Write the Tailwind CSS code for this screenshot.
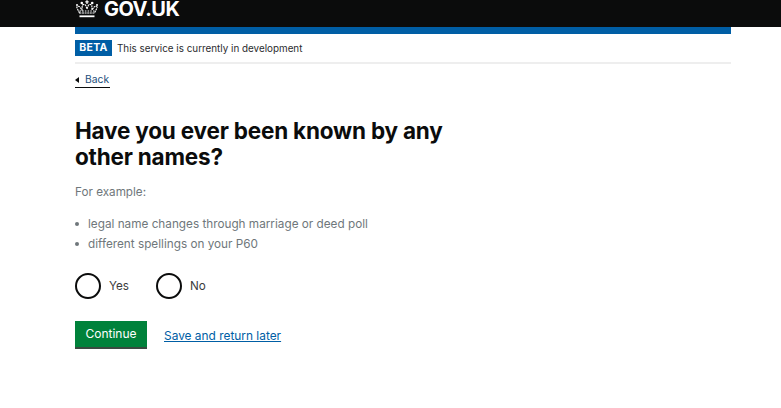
<!DOCTYPE html>
<html lang="en">
<head>
<meta charset="utf-8">
<title>Have you ever been known by any other names?</title>
<script src="https://cdn.jsdelivr.net/npm/@tailwindcss/browser@4"></script>
</head>
<body class="bg-white font-['Inter','Liberation_Sans',sans-serif] text-[#0b0c0c]">

  <!-- Header -->
  <header class="h-[27px] bg-[#0b0c0c]">
    <div class="ml-[75px] flex items-center h-[18px] gap-[5px]">
      <svg class="w-[24px] h-[18px] text-white" viewBox="0 0 24 18" fill="none" stroke="currentColor">
        <path d="M4.500 13 L1.800 7.500 C2 5.800 4.300 5.800 5.300 7.500 L7 10 L7.200 5.300 C8.500 3.800 10.600 4.300 11 6 L12 9 L13 6 C13.400 4.300 15.500 3.800 16.800 5.300 L17 10 L18.700 7.500 C19.700 5.800 22 5.800 22.200 7.500 L19.500 13 Z" stroke-width="1.100" stroke-dasharray="2 0.600"/>
        <path d="M4.500 16.300 H19.500" stroke-width="1.800"/>
        <path d="M4.500 11 H19.500" stroke-width="1.200" stroke-dasharray="1.500 1.200"/>
        <path d="M12 0.300 V4 M10.300 1.800 H13.700" stroke-width="1.300"/>
        <circle cx="6.800" cy="3" r="1.300" fill="currentColor" stroke="none"/>
        <circle cx="17.200" cy="3" r="1.300" fill="currentColor" stroke="none"/>
        <circle cx="2" cy="5" r="1" fill="currentColor" stroke="none"/>
        <circle cx="22" cy="5" r="1" fill="currentColor" stroke="none"/>
      </svg>
      <span class="text-white font-bold text-[20px] leading-[18px] tracking-[-0.5px]">GOV.UK</span>
    </div>
  </header>

  <div class="ml-[75px] w-[656px]">
    <div class="h-[7px] bg-[#005ea5]"></div>

    <!-- Phase banner -->
    <div class="flex items-center h-[30px] gap-[5px] border-b-2 border-[#eeeeee]">
      <strong class="bg-[#005ea5] text-white text-[10.500px] font-bold leading-[16px] h-[16px] w-[37px] text-center tracking-[0.3px]">BETA</strong>
      <span class="text-[9.850px] leading-[16px] text-[#2b2c2e]">This service is currently in development</span>
    </div>

    <!-- Back link -->
    <a href="#" class="mt-[9px] inline-flex items-center gap-[6px] h-[15px] border-b border-[#0b0c0c] text-[10.300px] text-[#0b0c0c]">
      <span class="w-0 h-0 border-y-[3.500px] border-y-transparent border-r-[4px] border-r-[#0b0c0c]"></span>
      <span class="text-[#1d4f7c] pr-[1px]">Back</span>
    </a>

    <!-- Question -->
    <h1 class="mt-[29px] w-[400px] text-[22.500px] leading-[26px] font-bold tracking-[-0.2px]">Have you ever been known by any other names?</h1>
    <p class="mt-[13px] text-[11.700px] leading-[18px] text-[#6f777b]">For example:</p>
    <ul class="mt-[13px] text-[11.750px] leading-[20px] text-[#6f777b]">
      <li class="flex items-center"><span class="w-[4px] h-[4px] rounded-full bg-[#6f777b] mr-[9px]"></span>legal name changes through marriage or deed poll</li>
      <li class="flex items-center"><span class="w-[4px] h-[4px] rounded-full bg-[#6f777b] mr-[9px]"></span>different spellings on your P60</li>
    </ul>

    <!-- Radios -->
    <div class="mt-[19px] flex items-center h-[26px] text-[11.700px] text-[#3a3c3d]">
      <span class="w-[26px] h-[26px] rounded-full border-2 border-[#0b0c0c]"></span>
      <span class="ml-[8px] w-[47px] pt-[1px]">Yes</span>
      <span class="w-[26px] h-[26px] rounded-full border-2 border-[#0b0c0c]"></span>
      <span class="ml-[8px] pt-[1px]">No</span>
    </div>

    <!-- Actions -->
    <div class="mt-[22px] flex items-center gap-[17px]">
      <button class="w-[72px] h-[28px] bg-[#00823b] text-white text-[12px] leading-[26px] text-center border-b-2 border-[#3a4a40]">Continue</button>
      <a href="#" class="pt-[1px] text-[11.900px] text-[#005ea5] underline">Save and return later</a>
    </div>
  </div>
</body>
</html>
